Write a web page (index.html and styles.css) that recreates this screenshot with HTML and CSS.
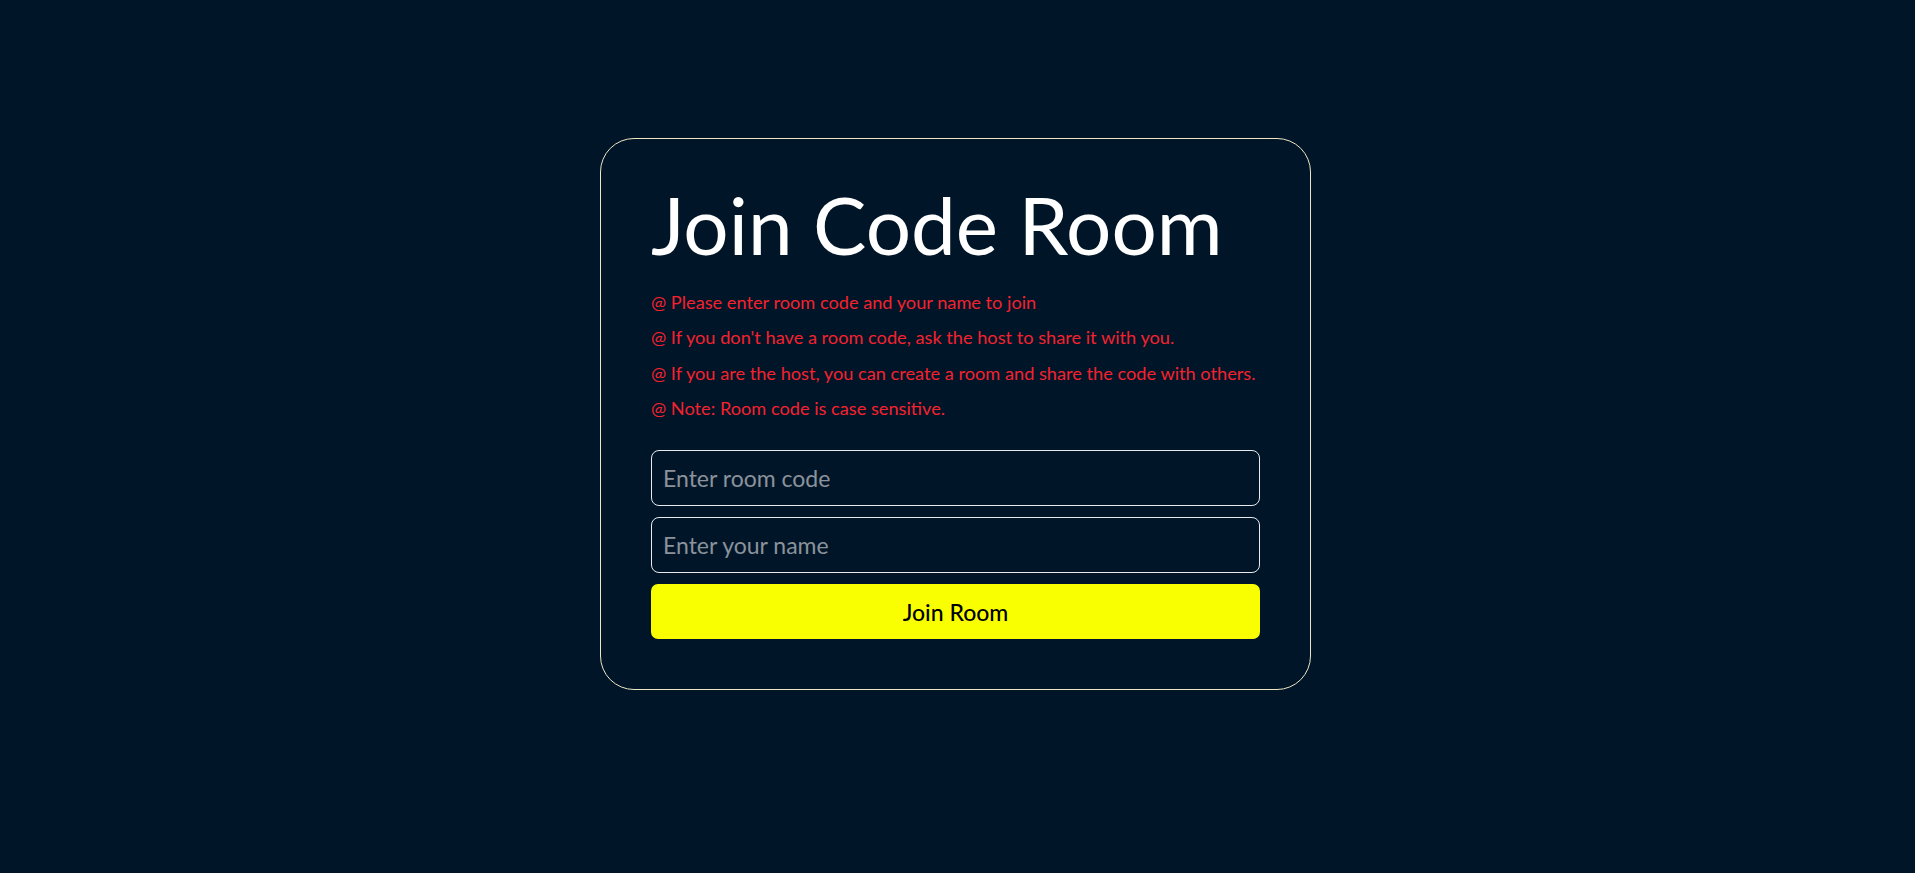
FILE: index.html
```html
<!DOCTYPE html>
<html>
<head>
<meta charset="utf-8">
<title>Join Code Room</title>
<link rel="stylesheet" href="styles.css">
</head>
<body>
<main class="page">
  <section class="card">
    <h1 class="title">Join Code Room</h1>
    <ul class="notes">
      <li>@ Please enter room code and your name to join</li>
      <li>@ If you don't have a room code, ask the host to share it with you.</li>
      <li>@ If you are the host, you can create a room and share the code with others.</li>
      <li>@ Note: Room code is case sensitive.</li>
    </ul>
    <form class="form">
      <input class="field" type="text" placeholder="Enter room code">
      <input class="field" type="text" placeholder="Enter your name">
      <button class="btn" type="button">Join Room</button>
    </form>
  </section>
</main>
</body>
</html>
```

FILE: styles.css
```css
html, body {
  margin: 0;
  padding: 0;
  background: #001628;
  height: 100%;
}
body {
  font-family: "Lato", "Liberation Sans", sans-serif;
  color: #fff;
}
.page {
  display: flex;
  justify-content: center;
  padding-top: 138px;
  padding-right: 4px;
}
.card {
  box-sizing: border-box;
  width: 711px;
  height: 552px;
  border: 1px solid #efe6c3;
  border-radius: 34px;
  padding: 37px 50px 50px;
}
.title {
  margin: 0;
  font-size: 80px;
  font-weight: 400;
  line-height: 96px;
  letter-spacing: 0;
}
.notes {
  list-style: none;
  margin: 13px 0 0;
  padding: 0;
  color: #f5212f;
  font-size: 18.2px;
  line-height: 35.3px;
  white-space: nowrap;
}
.form {
  display: flex;
  flex-direction: column;
  gap: 11px;
  margin-top: 24px;
}
.field {
  box-sizing: border-box;
  height: 56px;
  border: 1px solid #e8eaee;
  border-radius: 8px;
  background: transparent;
  padding: 0 11px;
  font-family: inherit;
  font-size: 23px;
  color: #fff;
  outline: none;
}
.field::placeholder {
  color: #8b929b;
}
.btn {
  height: 55px;
  border: 0;
  border-radius: 7px;
  background: #f9ff00;
  color: #000;
  font-family: inherit;
  font-size: 23px;
  font-weight: 500;
}
```
